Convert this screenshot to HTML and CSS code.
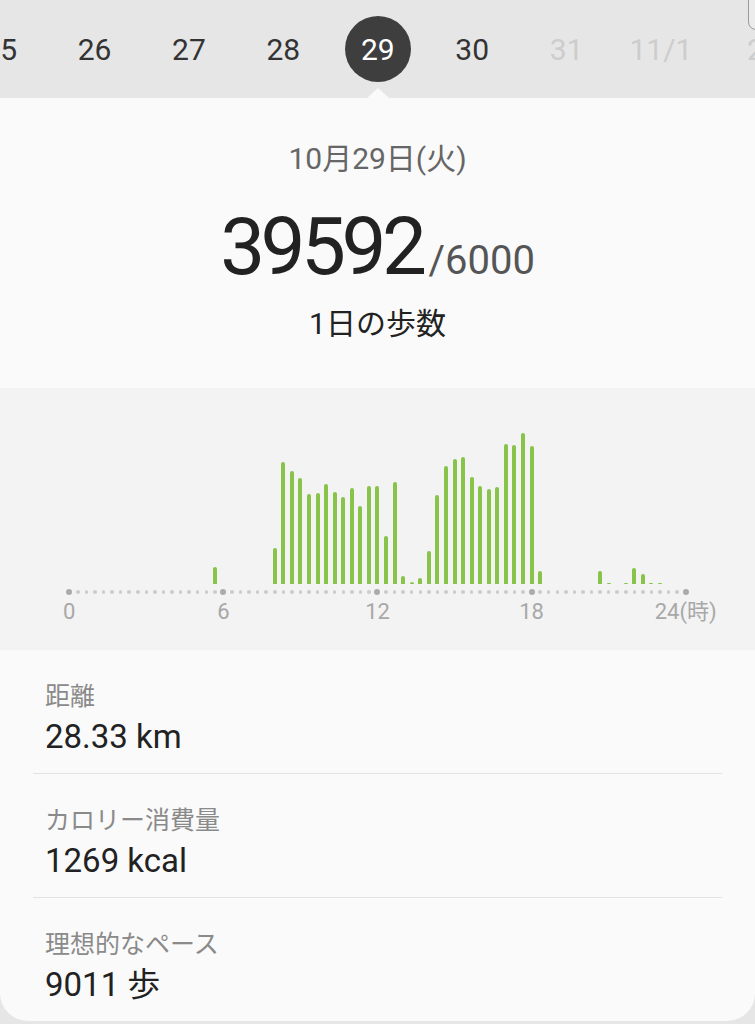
FILE: index.html
```html
<!DOCTYPE html>
<html lang="ja">
<head>
  <meta charset="UTF-8">
  <meta name="viewport" content="width=device-width, initial-scale=1.0">
  <title>歩数</title>
  <link rel="stylesheet" href="styles.css">
</head>
<body>
  <header class="dates">
    <div class="date-row">
      <span class="day">25</span>
      <span class="day">26</span>
      <span class="day">27</span>
      <span class="day">28</span>
      <span class="day selected"><span class="dot">29</span></span>
      <span class="day">30</span>
      <span class="day future">31</span>
      <span class="day future">11/1</span>
      <span class="day future">2</span>
    </div>
  </header>
  <div class="edge"></div>

  <main class="card">
    <section class="summary">
      <div class="summary-date">10月29日(火)</div>
      <div class="total"><span class="total-steps">39592</span><span class="total-goal">/6000</span></div>
      <div class="caption">1日の歩数</div>
    </section>

    <section class="chart">
      <div class="plot">
        <div class="bars">
          <span class="bar"></span><span class="bar"></span><span class="bar"></span>
          <span class="bar"></span><span class="bar"></span><span class="bar"></span>
          <span class="bar"></span><span class="bar"></span><span class="bar"></span>
          <span class="bar"></span><span class="bar"></span><span class="bar"></span>
          <span class="bar"></span><span class="bar"></span><span class="bar"></span>
          <span class="bar"></span><span class="bar"></span><span class="bar" style="height:17px"></span>
          <span class="bar"></span><span class="bar"></span><span class="bar"></span>
          <span class="bar"></span><span class="bar"></span><span class="bar"></span>
          <span class="bar" style="height:36px"></span><span class="bar" style="height:122px"></span><span class="bar" style="height:113px"></span>
          <span class="bar" style="height:106px"></span><span class="bar" style="height:90px"></span><span class="bar" style="height:91px"></span>
          <span class="bar" style="height:100px"></span><span class="bar" style="height:92px"></span><span class="bar" style="height:87px"></span>
          <span class="bar" style="height:96px"></span><span class="bar" style="height:78px"></span><span class="bar" style="height:98px"></span>
          <span class="bar" style="height:98px"></span><span class="bar" style="height:48px"></span><span class="bar" style="height:102px"></span>
          <span class="bar" style="height:8px"></span><span class="bar" style="height:2px"></span><span class="bar" style="height:6px"></span>
          <span class="bar" style="height:33px"></span><span class="bar" style="height:89px"></span><span class="bar" style="height:118px"></span>
          <span class="bar" style="height:125px"></span><span class="bar" style="height:127px"></span><span class="bar" style="height:107px"></span>
          <span class="bar" style="height:98px"></span><span class="bar" style="height:95px"></span><span class="bar" style="height:97px"></span>
          <span class="bar" style="height:140px"></span><span class="bar" style="height:139px"></span><span class="bar" style="height:151px"></span>
          <span class="bar" style="height:138px"></span><span class="bar" style="height:13px"></span><span class="bar"></span>
          <span class="bar"></span><span class="bar"></span><span class="bar"></span>
          <span class="bar"></span><span class="bar"></span><span class="bar" style="height:13px"></span>
          <span class="bar" style="height:1px"></span><span class="bar"></span><span class="bar" style="height:1px"></span>
          <span class="bar" style="height:16px"></span><span class="bar" style="height:10px"></span><span class="bar" style="height:1px"></span>
          <span class="bar" style="height:1px"></span><span class="bar"></span><span class="bar"></span>
          <span class="bar"></span>
        </div>
        <div class="axis">
          <i class="major"></i><i></i><i></i><i></i><i></i><i></i><i></i><i></i><i></i>
          <i></i><i></i><i></i><i></i><i></i><i></i><i></i><i></i><i></i>
          <i class="major"></i><i></i><i></i><i></i><i></i><i></i><i></i><i></i><i></i>
          <i></i><i></i><i></i><i></i><i></i><i></i><i></i><i></i><i></i>
          <i class="major"></i><i></i><i></i><i></i><i></i><i></i><i></i><i></i><i></i>
          <i></i><i></i><i></i><i></i><i></i><i></i><i></i><i></i><i></i>
          <i class="major"></i><i></i><i></i><i></i><i></i><i></i><i></i><i></i><i></i>
          <i></i><i></i><i></i><i></i><i></i><i></i><i></i><i></i><i></i>
          <i class="major"></i>
        </div>
        <div class="ticks">
          <span class="tick t0">0</span>
          <span class="tick t6">6</span>
          <span class="tick t12">12</span>
          <span class="tick t18">18</span>
          <span class="tick t24">24(時)</span>
        </div>
      </div>
    </section>

    <ul class="stats">
      <li class="stat">
        <div class="stat-label">距離</div>
        <div class="stat-value">28.33 km</div>
      </li>
      <li class="stat">
        <div class="stat-label">カロリー消費量</div>
        <div class="stat-value">1269 kcal</div>
      </li>
      <li class="stat">
        <div class="stat-label">理想的なペース</div>
        <div class="stat-value">9011 歩</div>
      </li>
    </ul>
  </main>
</body>
</html>
```

FILE: styles.css
```css
body {
  margin: 0;
  width: 755px;
  height: 1024px;
  overflow: hidden;
  position: relative;
  background: #e6e6e6;
  font-family: Roboto, "Noto Sans CJK JP", sans-serif;
  color: #222;
}

/* date strip */
.dates {
  height: 98px;
  background: #e6e6e6;
  overflow: hidden;
}
.date-row {
  display: flex;
  height: 100%;
  margin-left: -47px;
}
.day {
  flex: 0 0 94.4px;
  position: relative;
  display: flex;
  align-items: center;
  justify-content: center;
  font-size: 30px;
  color: #333;
}
.day.future {
  color: #cdcdcd;
}
.day .dot {
  width: 66px;
  height: 66px;
  border-radius: 50%;
  background: #3e3e3e;
  color: #fff;
  display: flex;
  align-items: center;
  justify-content: center;
}
.day.selected::after {
  content: "";
  position: absolute;
  bottom: 0;
  left: 50%;
  margin-left: -11px;
  border-left: 11px solid transparent;
  border-right: 11px solid transparent;
  border-bottom: 10px solid #fafafa;
}
.edge {
  position: absolute;
  top: -12px;
  left: 748px;
  width: 30px;
  height: 40px;
  border: 1.5px solid #9a9a9a;
  border-radius: 8px;
  background: #ececec;
}

/* card */
.card {
  background: #fafafa;
  border-radius: 0 0 28px 28px;
  overflow: hidden;
}
.summary {
  text-align: center;
  padding: 42px 0 45px;
}
.summary-date {
  font-size: 30px;
  line-height: 38px;
  color: #666;
}
.total {
  margin-top: 25px;
  font-size: 80px;
  line-height: 88px;
}
.total-steps {
  letter-spacing: -4.5px;
  color: #222;
}
.total-goal {
  font-size: 40px;
  line-height: 1;
  color: #555;
  margin-left: 6px;
}
.caption {
  margin-top: 14px;
  font-size: 30px;
  line-height: 38px;
  color: #222;
}

/* hourly chart */
.chart {
  background: #f3f3f3;
  height: 262px;
  box-sizing: border-box;
  padding-top: 36px;
}
.plot {
  width: 625px;
  margin-left: 65px;
}
.bars, .axis, .ticks {
  display: grid;
  grid-template-columns: repeat(73, 1fr);
}
.bars {
  height: 160px;
  align-items: end;
  justify-items: center;
}
.bar {
  width: 4px;
  background: #88c34a;
  border-radius: 2px 2px 0 0;
}
.axis {
  height: 8px;
  margin-top: 4px;
  align-items: center;
  justify-items: center;
}
.axis i {
  width: 3.5px;
  height: 3.5px;
  border-radius: 50%;
  background: #cdcdcd;
}
.axis i.major {
  width: 6px;
  height: 6px;
  background: #ababab;
}
.ticks {
  margin-top: 2px;
  font-size: 22px;
  line-height: 28px;
  color: #a8a8a8;
}
.tick {
  grid-row: 1;
  justify-self: center;
  width: 0;
  display: flex;
  justify-content: center;
  white-space: nowrap;
}
.t0 { grid-column: 1; }
.t6 { grid-column: 19; }
.t12 { grid-column: 37; }
.t18 { grid-column: 55; }
.t24 { grid-column: 73; }

/* stats list */
.stats {
  list-style: none;
  margin: 0;
  padding: 0 33px;
}
.stat {
  padding: 31px 12px 13px;
  border-bottom: 1px solid #e3e3e3;
}
.stat:last-child {
  border-bottom: 0;
}
.stat-label {
  font-size: 25px;
  line-height: 32px;
  color: #8a8a8a;
}
.stat-value {
  font-size: 33px;
  line-height: 47px;
  color: #222;
}
```
